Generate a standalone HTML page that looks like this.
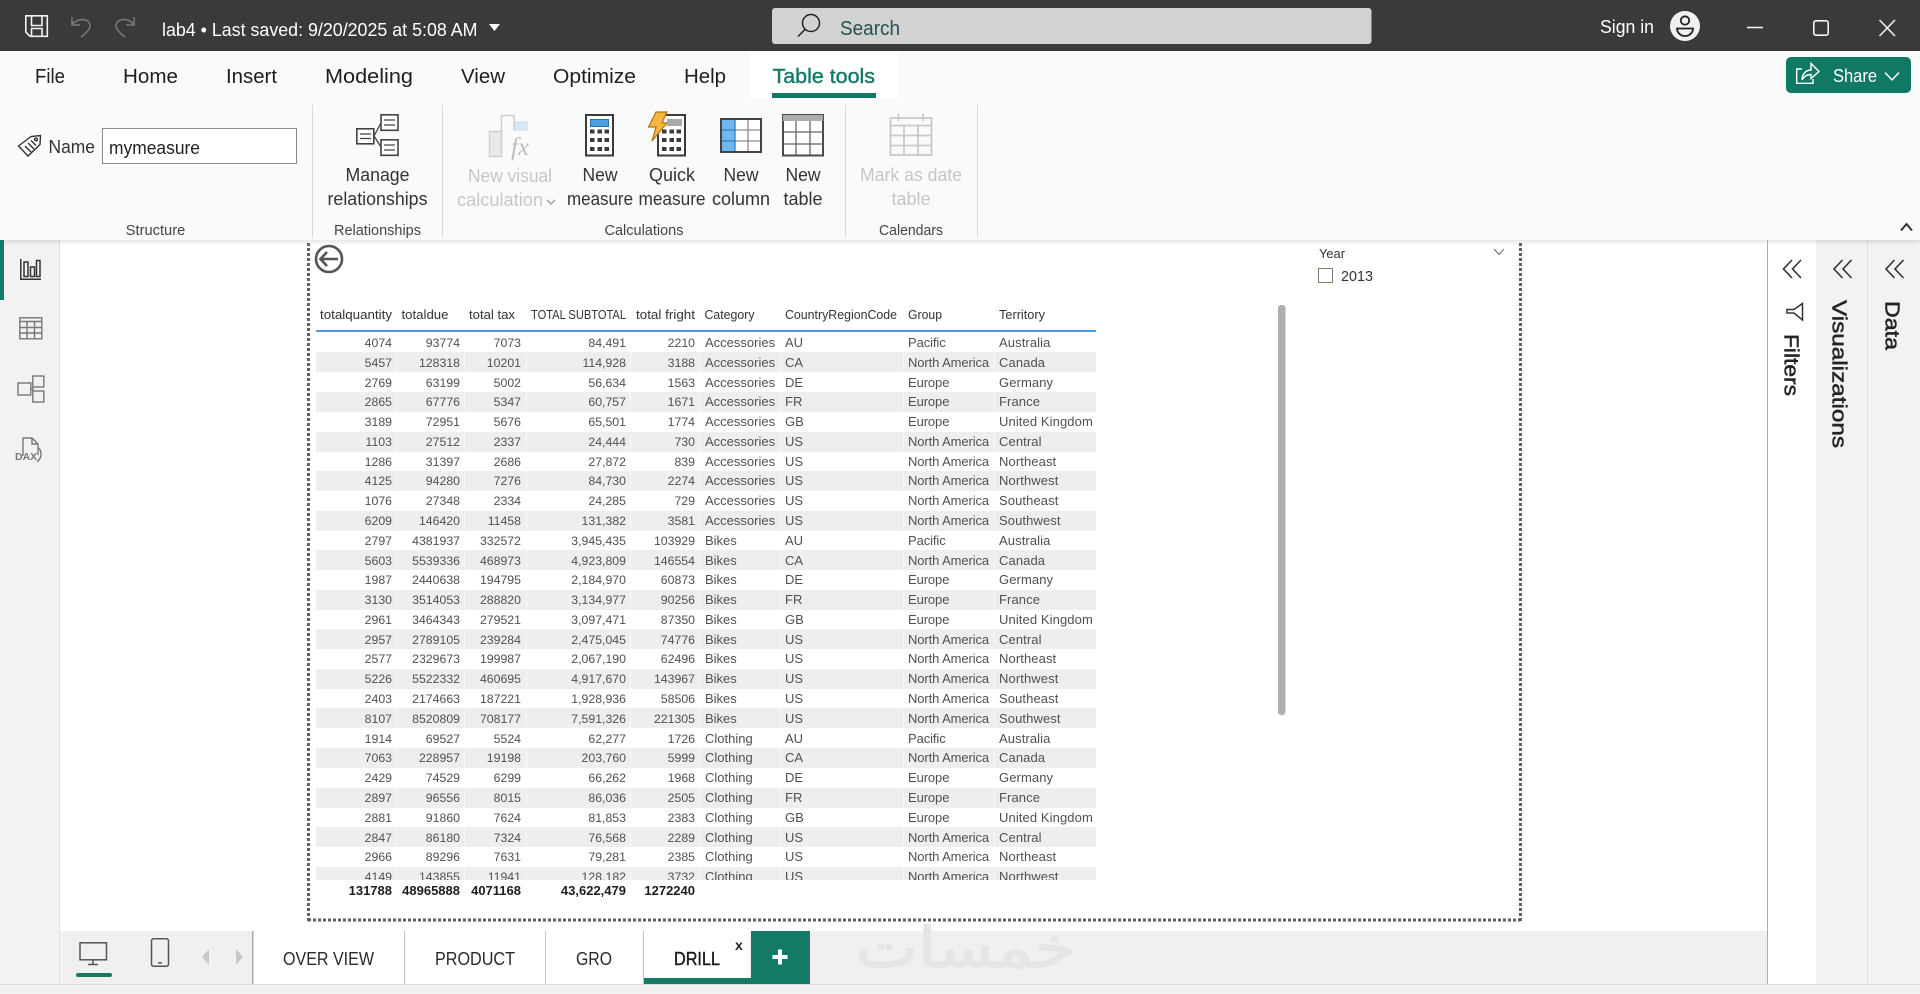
<!DOCTYPE html>
<html lang="en"><head><meta charset="utf-8"><title>lab4</title>
<style>
html,body{margin:0;padding:0;width:1920px;height:994px;overflow:hidden;background:#fff;font-family:"Liberation Sans",sans-serif}
.p{position:absolute}
#tb{left:0;top:0;width:1920px;height:51px;background:#3c3a38}
#nav{left:0;top:240px;width:60px;height:744px;background:#f3f2f1;box-shadow:inset -1px 0 0 #e2e1e0}
#bot{left:60px;top:931px;width:1707px;height:53px;background:#f1f0ef}
#st{left:0;top:984px;width:1920px;height:10px;background:#f3f2f1;border-top:1px solid #dcdbda;box-sizing:border-box}
#vis{left:1816px;top:240px;width:52px;height:744px;background:#f3f2f1;box-shadow:inset -1px 0 0 #e2e1e0}
#dat{left:1868px;top:240px;width:52px;height:744px;background:#f3f2f1}
#rb{left:0;top:51px;width:1920px;height:189px;background:#f9fbfa;box-shadow:0 2px 5px rgba(0,0,0,.12)}
#tbl{left:0;top:0;width:1920px;height:880px;overflow:hidden;font-size:12.3px;color:#505050;line-height:20px}
.r{position:absolute;left:316px;width:780px;height:20px}
.r:nth-child(even){background:#eee}
.r i{position:absolute;top:var(--o,0);white-space:nowrap;font-style:normal}
.r .a{right:704px}.r .b{right:636px}.r .c{right:575px}.r .d{right:470px}.r .e{right:401px}
.r .f{left:389px;font-size:13px}.r .g{left:469px;font-size:13px}.r .h{left:592px;font-size:13px;letter-spacing:-.1px}.r .j{left:683px;font-size:13px;letter-spacing:.1px}
.tot{position:absolute;top:881px;font-size:13px;font-weight:700;color:#1d1d1d;line-height:20px;white-space:nowrap}
svg{position:absolute;left:0;top:0}
text{font-family:"Liberation Sans",sans-serif}
</style></head><body>
<div class="p" id="tb"></div>
<div class="p" id="nav"></div>
<div class="p" id="vis"></div>
<div class="p" id="dat"></div>
<div class="p" id="bot"></div>
<div class="p" id="st"></div>
<div class="p" id="rb"></div>
<div class="p" id="tbl">
<div class="r" style="top:333px"><i class="a">4074</i><i class="b">93774</i><i class="c">7073</i><i class="d">84,491</i><i class="e">2210</i><i class="f">Accessories</i><i class="g">AU</i><i class="h">Pacific</i><i class="j">Australia</i></div>
<div class="r" style="top:352px;--o:1px"><i class="a">5457</i><i class="b">128318</i><i class="c">10201</i><i class="d">114,928</i><i class="e">3188</i><i class="f">Accessories</i><i class="g">CA</i><i class="h">North America</i><i class="j">Canada</i></div>
<div class="r" style="top:373px"><i class="a">2769</i><i class="b">63199</i><i class="c">5002</i><i class="d">56,634</i><i class="e">1563</i><i class="f">Accessories</i><i class="g">DE</i><i class="h">Europe</i><i class="j">Germany</i></div>
<div class="r" style="top:392px"><i class="a">2865</i><i class="b">67776</i><i class="c">5347</i><i class="d">60,757</i><i class="e">1671</i><i class="f">Accessories</i><i class="g">FR</i><i class="h">Europe</i><i class="j">France</i></div>
<div class="r" style="top:412px"><i class="a">3189</i><i class="b">72951</i><i class="c">5676</i><i class="d">65,501</i><i class="e">1774</i><i class="f">Accessories</i><i class="g">GB</i><i class="h">Europe</i><i class="j">United Kingdom</i></div>
<div class="r" style="top:432px"><i class="a">1103</i><i class="b">27512</i><i class="c">2337</i><i class="d">24,444</i><i class="e">730</i><i class="f">Accessories</i><i class="g">US</i><i class="h">North America</i><i class="j">Central</i></div>
<div class="r" style="top:452px"><i class="a">1286</i><i class="b">31397</i><i class="c">2686</i><i class="d">27,872</i><i class="e">839</i><i class="f">Accessories</i><i class="g">US</i><i class="h">North America</i><i class="j">Northeast</i></div>
<div class="r" style="top:471px"><i class="a">4125</i><i class="b">94280</i><i class="c">7276</i><i class="d">84,730</i><i class="e">2274</i><i class="f">Accessories</i><i class="g">US</i><i class="h">North America</i><i class="j">Northwest</i></div>
<div class="r" style="top:491px"><i class="a">1076</i><i class="b">27348</i><i class="c">2334</i><i class="d">24,285</i><i class="e">729</i><i class="f">Accessories</i><i class="g">US</i><i class="h">North America</i><i class="j">Southeast</i></div>
<div class="r" style="top:511px"><i class="a">6209</i><i class="b">146420</i><i class="c">11458</i><i class="d">131,382</i><i class="e">3581</i><i class="f">Accessories</i><i class="g">US</i><i class="h">North America</i><i class="j">Southwest</i></div>
<div class="r" style="top:531px"><i class="a">2797</i><i class="b">4381937</i><i class="c">332572</i><i class="d">3,945,435</i><i class="e">103929</i><i class="f">Bikes</i><i class="g">AU</i><i class="h">Pacific</i><i class="j">Australia</i></div>
<div class="r" style="top:550px;--o:1px"><i class="a">5603</i><i class="b">5539336</i><i class="c">468973</i><i class="d">4,923,809</i><i class="e">146554</i><i class="f">Bikes</i><i class="g">CA</i><i class="h">North America</i><i class="j">Canada</i></div>
<div class="r" style="top:570px"><i class="a">1987</i><i class="b">2440638</i><i class="c">194795</i><i class="d">2,184,970</i><i class="e">60873</i><i class="f">Bikes</i><i class="g">DE</i><i class="h">Europe</i><i class="j">Germany</i></div>
<div class="r" style="top:590px"><i class="a">3130</i><i class="b">3514053</i><i class="c">288820</i><i class="d">3,134,977</i><i class="e">90256</i><i class="f">Bikes</i><i class="g">FR</i><i class="h">Europe</i><i class="j">France</i></div>
<div class="r" style="top:610px"><i class="a">2961</i><i class="b">3464343</i><i class="c">279521</i><i class="d">3,097,471</i><i class="e">87350</i><i class="f">Bikes</i><i class="g">GB</i><i class="h">Europe</i><i class="j">United Kingdom</i></div>
<div class="r" style="top:629px;--o:1px"><i class="a">2957</i><i class="b">2789105</i><i class="c">239284</i><i class="d">2,475,045</i><i class="e">74776</i><i class="f">Bikes</i><i class="g">US</i><i class="h">North America</i><i class="j">Central</i></div>
<div class="r" style="top:649px"><i class="a">2577</i><i class="b">2329673</i><i class="c">199987</i><i class="d">2,067,190</i><i class="e">62496</i><i class="f">Bikes</i><i class="g">US</i><i class="h">North America</i><i class="j">Northeast</i></div>
<div class="r" style="top:669px"><i class="a">5226</i><i class="b">5522332</i><i class="c">460695</i><i class="d">4,917,670</i><i class="e">143967</i><i class="f">Bikes</i><i class="g">US</i><i class="h">North America</i><i class="j">Northwest</i></div>
<div class="r" style="top:689px"><i class="a">2403</i><i class="b">2174663</i><i class="c">187221</i><i class="d">1,928,936</i><i class="e">58506</i><i class="f">Bikes</i><i class="g">US</i><i class="h">North America</i><i class="j">Southeast</i></div>
<div class="r" style="top:708px;--o:1px"><i class="a">8107</i><i class="b">8520809</i><i class="c">708177</i><i class="d">7,591,326</i><i class="e">221305</i><i class="f">Bikes</i><i class="g">US</i><i class="h">North America</i><i class="j">Southwest</i></div>
<div class="r" style="top:729px"><i class="a">1914</i><i class="b">69527</i><i class="c">5524</i><i class="d">62,277</i><i class="e">1726</i><i class="f">Clothing</i><i class="g">AU</i><i class="h">Pacific</i><i class="j">Australia</i></div>
<div class="r" style="top:748px"><i class="a">7063</i><i class="b">228957</i><i class="c">19198</i><i class="d">203,760</i><i class="e">5999</i><i class="f">Clothing</i><i class="g">CA</i><i class="h">North America</i><i class="j">Canada</i></div>
<div class="r" style="top:768px"><i class="a">2429</i><i class="b">74529</i><i class="c">6299</i><i class="d">66,262</i><i class="e">1968</i><i class="f">Clothing</i><i class="g">DE</i><i class="h">Europe</i><i class="j">Germany</i></div>
<div class="r" style="top:788px"><i class="a">2897</i><i class="b">96556</i><i class="c">8015</i><i class="d">86,036</i><i class="e">2505</i><i class="f">Clothing</i><i class="g">FR</i><i class="h">Europe</i><i class="j">France</i></div>
<div class="r" style="top:808px"><i class="a">2881</i><i class="b">91860</i><i class="c">7624</i><i class="d">81,853</i><i class="e">2383</i><i class="f">Clothing</i><i class="g">GB</i><i class="h">Europe</i><i class="j">United Kingdom</i></div>
<div class="r" style="top:827px;--o:1px"><i class="a">2847</i><i class="b">86180</i><i class="c">7324</i><i class="d">76,568</i><i class="e">2289</i><i class="f">Clothing</i><i class="g">US</i><i class="h">North America</i><i class="j">Central</i></div>
<div class="r" style="top:847px"><i class="a">2966</i><i class="b">89296</i><i class="c">7631</i><i class="d">79,281</i><i class="e">2385</i><i class="f">Clothing</i><i class="g">US</i><i class="h">North America</i><i class="j">Northeast</i></div>
<div class="r" style="top:867px"><i class="a">4149</i><i class="b">143855</i><i class="c">11941</i><i class="d">128,182</i><i class="e">3732</i><i class="f">Clothing</i><i class="g">US</i><i class="h">North America</i><i class="j">Northwest</i></div>
</div>
<div class="tot" style="right:1528px">131788</div>
<div class="tot" style="right:1460px">48965888</div>
<div class="tot" style="right:1399px">4071168</div>
<div class="tot" style="right:1294px">43,622,479</div>
<div class="tot" style="right:1225px">1272240</div>

<svg width="1920" height="994" viewBox="0 0 1920 994">
<!-- table grid + header -->
<g stroke="#fff" stroke-width="1" opacity=".6"><path d="M396.5 333V880M464.5 333V880M526.5 333V880M630.5 333V880M699.5 333V880M780.5 333V880M903.5 333V880M994.5 333V880"/></g>
<rect x="316" y="330" width="780" height="2" fill="#4a9ae0"/>
<g font-size="13" fill="#333">
<text x="320" y="319" textLength="72" lengthAdjust="spacingAndGlyphs">totalquantity</text>
<text x="401.5" y="319" textLength="47" lengthAdjust="spacingAndGlyphs">totaldue</text>
<text x="469" y="319" textLength="46" lengthAdjust="spacingAndGlyphs">total tax</text>
<text x="531" y="319" textLength="95" lengthAdjust="spacingAndGlyphs">TOTAL SUBTOTAL</text>
<text x="636" y="319" textLength="59" lengthAdjust="spacingAndGlyphs">total fright</text>
<text x="704.5" y="319" textLength="50" lengthAdjust="spacingAndGlyphs">Category</text>
<text x="785" y="319" textLength="112" lengthAdjust="spacingAndGlyphs">CountryRegionCode</text>
<text x="908" y="319" textLength="34" lengthAdjust="spacingAndGlyphs">Group</text>
<text x="999" y="319" textLength="46" lengthAdjust="spacingAndGlyphs">Territory</text>
</g>
<!-- dotted frame -->
<g stroke="#606060" stroke-width="3" stroke-dasharray="3 2" fill="none"><path d="M308.5 243V921M308 920H1520M1520.5 243V921"/></g>
<!-- back arrow -->
<g fill="none" stroke="#555" stroke-width="2.6"><circle cx="329" cy="259" r="13"/><path d="M338 259H321M327 252L320.5 259L327 266"/></g>
<!-- scrollbar -->
<rect x="1278" y="305" width="7.5" height="410" rx="3" fill="#b0b0b0"/>
<!-- slicer -->
<text x="1319" y="258" font-size="13" fill="#333" textLength="26" lengthAdjust="spacingAndGlyphs">Year</text>
<path d="M1494 249L1499 254.5L1504 249" fill="none" stroke="#667" stroke-width="1"/>
<rect x="1318.5" y="268.5" width="14" height="14" fill="#fff" stroke="#8a7a60"/>
<text x="1341" y="281" font-size="15" fill="#333" textLength="32" lengthAdjust="spacingAndGlyphs">2013</text>

<!-- title bar -->
<g fill="none" stroke="#f2f2f2" stroke-width="1.6"><path d="M25.8 15.8H47.3V36.3H30L25.8 32Z"/><path d="M31.5 16V25.5H42V16M31.5 36V28.5H42V36"/></g>
<g fill="none" stroke="#7d7b79" stroke-width="1.5"><path d="M72 17V25H80M72 25C77 17 90 18 90 26C90 30 85 34 81 37"/><path d="M134 17V25H126M134 25C129 17 116 18 116 26C116 30 121 34 125 37"/></g>
<text x="162" y="36" font-size="18" fill="#fff" textLength="315.5" lengthAdjust="spacingAndGlyphs">lab4 • Last saved: 9/20/2025 at 5:08 AM</text>
<path d="M489 24H500L494.5 31Z" fill="#fff"/>
<rect x="772" y="8" width="599.5" height="36" rx="3" fill="#d2d2d2"/>
<g fill="none" stroke="#222" stroke-width="1.5"><circle cx="811" cy="23" r="8.5"/><path d="M805 29.5L798 36.5"/></g>
<text x="840" y="35" font-size="20" fill="#24504f" textLength="60" lengthAdjust="spacingAndGlyphs">Search</text>
<text x="1600" y="33" font-size="18" fill="#fff" textLength="54" lengthAdjust="spacingAndGlyphs">Sign in</text>
<circle cx="1685" cy="26" r="15" fill="#f1f1f1"/>
<g fill="none" stroke="#222" stroke-width="1.8"><circle cx="1685" cy="20.5" r="4.2"/><path d="M1677 28.5H1693A8 7.5 0 0 1 1677 28.5Z"/></g>
<g fill="none" stroke="#f2f2f2" stroke-width="1.6"><path d="M1747 27.5H1763"/><rect x="1813.8" y="20.8" width="14.4" height="14.4" rx="2"/><path d="M1879.5 20L1895 36M1895 20L1879.5 36"/></g>

<!-- ribbon tabs -->
<rect x="750" y="51" width="148" height="47" fill="#fff"/>
<rect x="772" y="93" width="104" height="5" fill="#137a66"/>
<g font-size="20" fill="#1e1e1e">
<text x="35" y="83" textLength="30" lengthAdjust="spacingAndGlyphs">File</text>
<text x="123" y="83" textLength="55" lengthAdjust="spacingAndGlyphs">Home</text>
<text x="226" y="83" textLength="51" lengthAdjust="spacingAndGlyphs">Insert</text>
<text x="325" y="83" textLength="88" lengthAdjust="spacingAndGlyphs">Modeling</text>
<text x="461" y="83" textLength="44" lengthAdjust="spacingAndGlyphs">View</text>
<text x="553" y="83" textLength="83" lengthAdjust="spacingAndGlyphs">Optimize</text>
<text x="684" y="83" textLength="42" lengthAdjust="spacingAndGlyphs">Help</text>
</g>
<text x="772.5" y="83" font-size="20" fill="#137a66" stroke="#137a66" stroke-width=".4" textLength="102.5" lengthAdjust="spacingAndGlyphs">Table tools</text>
<!-- Share -->
<rect x="1786" y="57" width="125" height="36" rx="5" fill="#117865"/>
<g fill="none" stroke="#fff" stroke-width="1.4"><path d="M1802 69H1796.7V83.3H1813V79"/><path d="M1802 80C1802 74 1806 70 1811 70V63.5L1819 71.5L1811 78.500V74.500C1807 74.500 1804 76 1802 80Z"/><path d="M1885 72.5L1892 80L1899 72.5"/></g>
<text x="1833" y="82" font-size="18" fill="#fff" textLength="44" lengthAdjust="spacingAndGlyphs">Share</text>
<path d="M1901 230.5L1906.5 224L1912 230.5" fill="none" stroke="#333" stroke-width="2"/>

<!-- ribbon separators -->
<g stroke="#d6d8d7"><path d="M312.5 105V237M442.5 105V237M845.5 105V237M977.5 105V237"/></g>

<!-- Name -->
<g fill="none" stroke="#333" stroke-width="1.4"><path d="M18.5 146L31 136.5L40.5 135.5L40 144.5L28 156Z"/><path d="M25 146L31 152M28 143L34 149M31 140.5L36 145.5"/><circle cx="36" cy="139.5" r="1.3"/></g>
<text x="48.5" y="153" font-size="18" fill="#333" textLength="46.5" lengthAdjust="spacingAndGlyphs">Name</text>
<rect x="102.5" y="128.5" width="194" height="35" fill="#fff" stroke="#8a8a8a"/>
<text x="109" y="154" font-size="18" fill="#222" textLength="91" lengthAdjust="spacingAndGlyphs">mymeasure</text>

<!-- Manage relationships icon -->
<g fill="#fbfcfb" stroke="#444" stroke-width="1.6"><rect x="356.8" y="128.8" width="17" height="15"/><rect x="381" y="114.8" width="17" height="15.5"/><rect x="381" y="139.8" width="17" height="15.5"/></g>
<g fill="none" stroke="#444" stroke-width="1.3"><path d="M360 134H371M360 138.5H371M384 120H395M384 125H395M384 145H395M384 150H395"/><path d="M374 136L381 123M374 136L381 147"/></g>

<!-- Viz calc icon -->
<rect x="489.5" y="131.5" width="12" height="25" fill="#e9e9e9" stroke="#cfcfcf" stroke-width="1.5"/>
<path d="M501.5 156V115.5H514V130" fill="none" stroke="#cfcfcf" stroke-width="1.5"/>
<rect x="515" y="122" width="12" height="8" fill="#d5e9f6" stroke="#c8dcea"/>
<text x="511" y="155" font-size="25" font-style="italic" fill="#bdbdbd" style="font-family:'Liberation Serif',serif">fx</text>

<!-- New measure -->
<rect x="586" y="115" width="27" height="40.5" fill="#fff" stroke="#3a3a3a" stroke-width="2"/>
<rect x="590.5" y="119.5" width="18" height="7" fill="#4c9ee3" stroke="#2b6fa8"/>
<g fill="#3a3a3a"><rect x="590" y="129.5" width="4.500" height="4"/><rect x="597.500" y="129.5" width="4.500" height="4"/><rect x="604.500" y="129.5" width="4.500" height="4"/><rect x="590" y="138" width="4.500" height="4"/><rect x="597.500" y="138" width="4.500" height="4"/><rect x="604.500" y="138" width="4.500" height="4"/><rect x="590" y="147" width="4.500" height="4"/><rect x="597.500" y="147" width="4.500" height="4"/><rect x="604.500" y="147" width="4.500" height="4"/></g>

<!-- Quick measure -->
<rect x="658" y="115" width="27" height="40.5" fill="#fff" stroke="#3a3a3a" stroke-width="2"/>
<rect x="667" y="119" width="15" height="7" fill="#a9a9a9"/>
<g fill="#3a3a3a"><rect x="662" y="129.5" width="4.500" height="4"/><rect x="669.500" y="129.5" width="4.500" height="4"/><rect x="676.500" y="129.5" width="4.500" height="4"/><rect x="662" y="138" width="4.500" height="4"/><rect x="669.500" y="138" width="4.500" height="4"/><rect x="676.500" y="138" width="4.500" height="4"/><rect x="662" y="147" width="4.500" height="4"/><rect x="669.500" y="147" width="4.500" height="4"/><rect x="676.500" y="147" width="4.500" height="4"/></g>
<path d="M656 112H667L662 123H667L652 141L656 127H648.5Z" fill="#f4b63f" stroke="#b8701a" stroke-width="1.2"/>

<!-- New column -->
<rect x="721" y="119" width="40" height="33" fill="#fff"/>
<rect x="721" y="119" width="14" height="33" fill="#6db8f0"/>
<g fill="none" stroke="#8d8d8d" stroke-width="1.3"><path d="M748 119V152M735 130H761M735 141H761"/></g>
<g fill="none" stroke="#2f7fc0" stroke-width="1.3"><path d="M721 130H735M721 141H735M735 119V152"/></g>
<rect x="721" y="119" width="40" height="33" fill="none" stroke="#444" stroke-width="2"/>

<!-- New table -->
<rect x="783" y="115" width="40" height="40.5" fill="#fff" stroke="#4a4a4a" stroke-width="2"/>
<rect x="783" y="115" width="40" height="6" fill="#adadad"/>
<g fill="none" stroke="#666" stroke-width="1.3"><path d="M796 121V155M810 121V155M783 132H823M783 144H823"/></g>

<!-- Date table -->
<g fill="none" stroke="#c9c9c9" stroke-width="1.8"><rect x="890.5" y="118" width="41" height="37"/><path d="M890.5 125.5H931.5M904 125.5V155M918 125.5V155M890.5 135.5H931.5M890.5 145.5H931.5M898.5 114V121M923 114V121"/></g>

<!-- ribbon text -->
<g font-size="18" fill="#333" text-anchor="middle">
<text x="377.5" y="181" textLength="64" lengthAdjust="spacingAndGlyphs">Manage</text>
<text x="377.5" y="205" textLength="100" lengthAdjust="spacingAndGlyphs">relationships</text>
<text x="600" y="181" textLength="35" lengthAdjust="spacingAndGlyphs">New</text>
<text x="600" y="205" textLength="66" lengthAdjust="spacingAndGlyphs">measure</text>
<text x="672" y="181" textLength="46" lengthAdjust="spacingAndGlyphs">Quick</text>
<text x="672" y="205" textLength="67" lengthAdjust="spacingAndGlyphs">measure</text>
<text x="741" y="181" textLength="35" lengthAdjust="spacingAndGlyphs">New</text>
<text x="741" y="205" textLength="58" lengthAdjust="spacingAndGlyphs">column</text>
<text x="803" y="181" textLength="35" lengthAdjust="spacingAndGlyphs">New</text>
<text x="803" y="205" textLength="39" lengthAdjust="spacingAndGlyphs">table</text>
</g>
<g font-size="18" fill="#c6c6c6" text-anchor="middle">
<text x="510" y="182" textLength="84" lengthAdjust="spacingAndGlyphs">New visual</text>
<text x="500" y="206" textLength="86" lengthAdjust="spacingAndGlyphs">calculation</text>
<text x="911" y="181" textLength="102" lengthAdjust="spacingAndGlyphs">Mark as date</text>
<text x="911" y="205" textLength="39" lengthAdjust="spacingAndGlyphs">table</text>
</g>
<path d="M547 200L551 204L555 200" fill="none" stroke="#999" stroke-width="1.3"/>
<g font-size="14.7" fill="#444" text-anchor="middle">
<text x="155.5" y="235" textLength="59.5" lengthAdjust="spacingAndGlyphs">Structure</text>
<text x="377.5" y="235" textLength="87" lengthAdjust="spacingAndGlyphs">Relationships</text>
<text x="644" y="235" textLength="79" lengthAdjust="spacingAndGlyphs">Calculations</text>
<text x="911" y="235" textLength="64" lengthAdjust="spacingAndGlyphs">Calendars</text>
</g>

<!-- left nav -->
<rect x="0" y="240" width="4" height="60" fill="#137a66"/>
<g fill="none" stroke="#333" stroke-width="1.5"><path d="M20.8 259V279.2H41"/><rect x="24" y="262" width="4" height="14.500"/><rect x="30.500" y="267" width="4" height="9.500"/><rect x="36.500" y="260.500" width="3.500" height="16"/></g>
<g fill="none" stroke="#777" stroke-width="1.4"><rect x="19.8" y="317.8" width="22" height="21"/><path d="M19.8 321.5H41.8M19.8 327.5H41.8M19.8 333H41.8M27 321.5V339M34.5 321.5V339"/></g>
<g fill="none" stroke="#777" stroke-width="1.4"><rect x="32.800" y="376" width="11" height="11"/><rect x="32.800" y="391" width="11" height="11"/><rect x="18" y="383" width="12.800" height="12"/><path d="M30.800 389H32.800M32.800 387V391"/></g>
<g fill="none" stroke="#777" stroke-width="1.4"><path d="M23 456V438H32L38 444V455M32 438V444H38"/><path d="M39 448C42 452 42 458 37 462"/></g>
<text x="15" y="460" font-size="10.5" font-weight="700" fill="#777">DAX</text>

<!-- bottom bar -->
<rect x="252" y="931" width="1.5" height="53" fill="#a9a9a9"/>
<rect x="253.5" y="931" width="150.5" height="53" fill="#fff"/>
<rect x="405" y="931" width="140" height="53" fill="#fff"/>
<rect x="546" y="931" width="97" height="53" fill="#fff"/>
<rect x="644" y="931" width="106" height="47" fill="#fff"/>
<g stroke="#c4c4c4"><path d="M404.5 931V984M545.5 931V984M643.5 931V984"/></g>
<rect x="644" y="978" width="107" height="6" fill="#137a66"/>
<rect x="751" y="931" width="59" height="53" fill="#137a66"/>
<path d="M772.5 957H787.5M780 949.500V964.500" stroke="#fff" stroke-width="4"/>
<text x="735" y="950" font-size="14" font-weight="700" fill="#222">x</text>
<g font-size="18" fill="#2a2a2a">
<text x="283" y="965" textLength="91" lengthAdjust="spacingAndGlyphs">OVER VIEW</text>
<text x="435" y="965" textLength="80" lengthAdjust="spacingAndGlyphs">PRODUCT</text>
<text x="576" y="965" textLength="36" lengthAdjust="spacingAndGlyphs">GRO</text>
</g>
<text x="674" y="965" font-size="18" fill="#1a1a1a" stroke="#1a1a1a" stroke-width=".4" textLength="46" lengthAdjust="spacingAndGlyphs">DRILL</text>
<g fill="none" stroke="#555" stroke-width="1.5"><rect x="80" y="942.8" width="26.5" height="17"/><path d="M93 960V964M88 964.5H98"/></g>
<rect x="151.5" y="938.8" width="17" height="27.5" rx="2" fill="none" stroke="#555" stroke-width="1.5"/>
<rect x="158" y="962" width="4" height="1.5" fill="#555"/>
<rect x="76" y="973" width="36" height="4" rx="2" fill="#137a66"/>
<path d="M209 949L202 957L209 965ZM236 949L243 957L236 965Z" fill="#c8c8c8"/>
<!-- watermark -->
<text transform="translate(1076 967) scale(1.18 1)" font-size="56" fill="#e6e5e3" stroke="#e6e5e3" stroke-width="1.500" direction="rtl" style="font-family:'DejaVu Sans',sans-serif">خمسات</text>

<!-- side panels -->
<path d="M1767.5 240V984" stroke="#adadad"/>
<g fill="none" stroke="#333" stroke-width="1.6"><path d="M1792 260L1783.5 269L1792 278M1801 260L1792.5 269L1801 278M1842.5 260L1834 269L1842.5 278M1851.5 260L1843 269L1851.5 278M1894.5 260L1886 269L1894.5 278M1903.5 260L1895 269L1903.5 278"/></g>
<path d="M1802.5 303.500V320L1794 313H1787V309.500H1794Z" fill="none" stroke="#333" stroke-width="1.5"/>
<g font-size="20" fill="#252423" stroke="#252423" stroke-width=".5">
<text transform="translate(1784.5 334) rotate(90)" textLength="62" lengthAdjust="spacingAndGlyphs">Filters</text>
<text transform="translate(1832.5 300) rotate(90)" textLength="148" lengthAdjust="spacingAndGlyphs">Visualizations</text>
<text transform="translate(1885.5 301) rotate(90)" textLength="49" lengthAdjust="spacingAndGlyphs">Data</text>
</g>
</svg>
</body></html>
